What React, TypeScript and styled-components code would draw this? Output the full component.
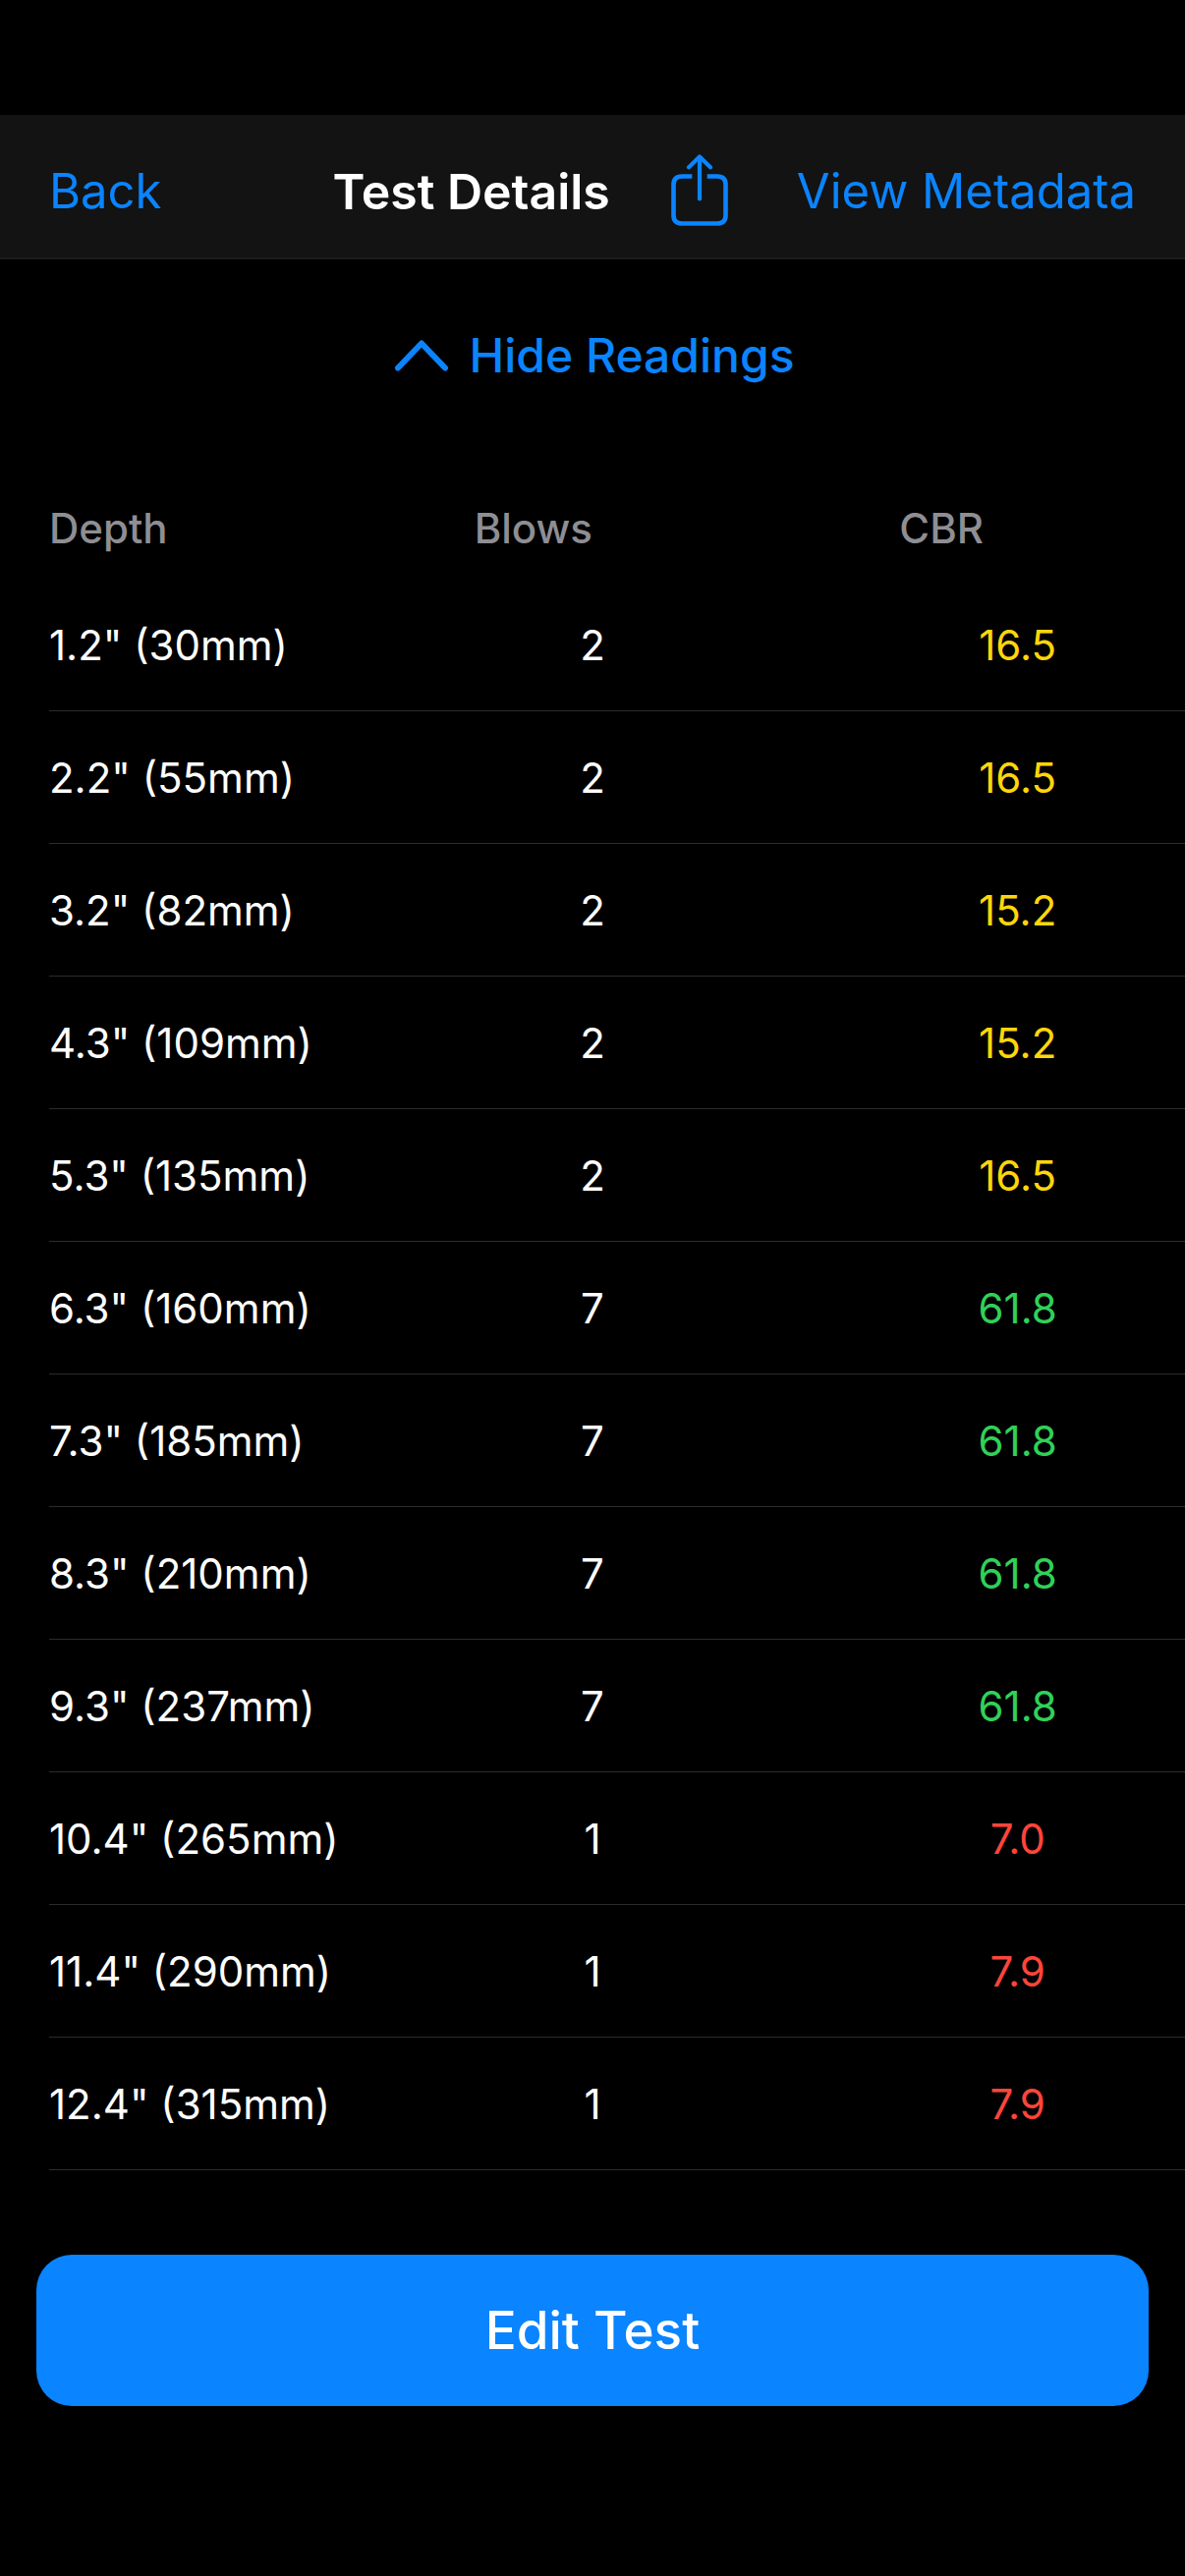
import React, { useState } from "react";
import styled, { createGlobalStyle } from "styled-components";

const GlobalStyle = createGlobalStyle`
  * { box-sizing: border-box; }
  body {
    margin: 0;
    background: #000;
    color: #fff;
    font-family: Inter, "Liberation Sans", sans-serif;
  }
  button {
    font-family: inherit;
    border: 0;
    padding: 0;
    margin: 0;
    background: none;
    color: inherit;
    cursor: pointer;
  }
`;

const Screen = styled.main`
  display: flex;
  flex-direction: column;
  min-height: 100vh;
  padding-top: 117px;
  background: #000;
`;

const NavBar = styled.header`
  display: flex;
  align-items: center;
  justify-content: space-between;
  height: 147px;
  padding: 10px 50px 0;
  background: #131313;
  border-bottom: 2px solid #1c1c1c;
`;

const NavGroup = styled.div`
  display: flex;
  align-items: center;
  gap: 62px;
`;

const NavTitle = styled.h1`
  margin: 0;
  font-size: 50px;
  line-height: 60px;
  font-weight: 600;
  white-space: nowrap;
`;

const NavButton = styled.button`
  display: flex;
  font-size: 49px;
  line-height: 60px;
  font-weight: 400;
  color: #0a84ff;
  white-space: nowrap;
`;

const NavIconButton = styled(NavButton)`
  padding-right: 8px;
`;

const ToggleButton = styled.button`
  display: flex;
  align-items: center;
  justify-content: center;
  gap: 20px;
  align-self: center;
  margin: 68px 0 94px;
  padding-left: 4px;
  font-size: 48px;
  line-height: 60px;
  font-weight: 500;
  color: #0a84ff;
`;

const Chevron = styled.svg<{ $flipped: boolean }>`
  transform: ${(p) => (p.$flipped ? "rotate(180deg)" : "none")};
`;

const Table = styled.table`
  display: block;
  padding-left: 50px;
  font-size: 42px;
  line-height: 54px;

  thead,
  tbody {
    display: block;
  }
`;

const Row = styled.tr<{ $header?: boolean }>`
  display: grid;
  grid-template-columns: repeat(3, minmax(0, 1fr));
  column-gap: 192px;
  align-items: center;
  height: ${(p) => (p.$header ? "103px" : "135px")};
  padding: ${(p) => (p.$header ? "0 50px 0 0" : "2px 50px 0 0")};
  border-bottom: ${(p) => (p.$header ? "0" : "1px solid #2c2c2e")};
`;

const HeadCell = styled.th`
  padding: 0;
  font-weight: 500;
  text-align: left;
  color: #8e8e93;
`;

const DepthCell = styled.td`
  padding: 0;
  white-space: nowrap;
`;

const ValueCell = styled.td<{ $color?: string }>`
  padding: 0;
  text-align: center;
  color: ${(p) => p.$color ?? "#fff"};
`;

const Footer = styled.footer`
  display: flex;
  padding: 86px 37px 0;
`;

const PrimaryButton = styled.button`
  flex: 1;
  height: 154px;
  border-radius: 36px;
  background: #0a84ff;
  color: #fff;
  font-size: 53px;
  line-height: 64px;
  font-weight: 500;
`;

const YELLOW = "#ffd60a";
const GREEN = "#30d158";
const RED = "#ff453a";

const readings = [
  { depth: '1.2" (30mm)', blows: 2, cbr: 16.5 },
  { depth: '2.2" (55mm)', blows: 2, cbr: 16.5 },
  { depth: '3.2" (82mm)', blows: 2, cbr: 15.2 },
  { depth: '4.3" (109mm)', blows: 2, cbr: 15.2 },
  { depth: '5.3" (135mm)', blows: 2, cbr: 16.5 },
  { depth: '6.3" (160mm)', blows: 7, cbr: 61.8 },
  { depth: '7.3" (185mm)', blows: 7, cbr: 61.8 },
  { depth: '8.3" (210mm)', blows: 7, cbr: 61.8 },
  { depth: '9.3" (237mm)', blows: 7, cbr: 61.8 },
  { depth: '10.4" (265mm)', blows: 1, cbr: 7.0 },
  { depth: '11.4" (290mm)', blows: 1, cbr: 7.9 },
  { depth: '12.4" (315mm)', blows: 1, cbr: 7.9 },
];

const cbrColor = (cbr: number) => (cbr < 10 ? RED : cbr < 30 ? YELLOW : GREEN);

function ShareIcon() {
  return (
    <svg width="58" height="76" viewBox="0 0 58 76" fill="none" stroke="currentColor" strokeWidth="4.6" strokeLinecap="round" strokeLinejoin="round" aria-hidden="true">
      <path d="M21.300 22.500H11C5.500 22.500 2.500 25.500 2.500 31V62C2.500 67.500 5.500 70.500 11 70.500H47C52.500 70.500 55.500 67.500 55.500 62V31C55.500 25.500 52.500 22.500 47 22.500H36.700" strokeLinecap="butt" />
      <path d="M29 3V45.500" strokeWidth="4.200" />
      <path d="M18 13.200L29 2.500L40 13.200" strokeWidth="4.200" />
    </svg>
  );
}

export default function App() {
  const [open, setOpen] = useState(true);
  return (
    <>
      <GlobalStyle />
      <Screen>
        <NavBar>
          <NavButton type="button">Back</NavButton>
          <NavGroup>
            <NavTitle>Test Details</NavTitle>
            <NavIconButton type="button" aria-label="Share">
              <ShareIcon />
            </NavIconButton>
            <NavButton type="button">View Metadata</NavButton>
          </NavGroup>
        </NavBar>
        <ToggleButton type="button" aria-expanded={open} onClick={() => setOpen(!open)}>
          <Chevron $flipped={!open} width="56" height="34" viewBox="0 0 56 34" fill="none" stroke="currentColor" strokeWidth="6" strokeLinecap="round" strokeLinejoin="round" aria-hidden="true">
            <path d="M4 29.500L28 4.500L52 29.500" />
          </Chevron>
          {open ? "Hide Readings" : "Show Readings"}
        </ToggleButton>
        {open && (
          <Table>
            <thead>
              <Row $header>
                <HeadCell scope="col">Depth</HeadCell>
                <HeadCell scope="col">Blows</HeadCell>
                <HeadCell scope="col">CBR</HeadCell>
              </Row>
            </thead>
            <tbody>
              {readings.map((r) => (
                <Row key={r.depth}>
                  <DepthCell>{r.depth}</DepthCell>
                  <ValueCell>{r.blows}</ValueCell>
                  <ValueCell $color={cbrColor(r.cbr)}>{r.cbr.toFixed(1)}</ValueCell>
                </Row>
              ))}
            </tbody>
          </Table>
        )}
        <Footer>
          <PrimaryButton type="button">Edit Test</PrimaryButton>
        </Footer>
      </Screen>
    </>
  );
}
